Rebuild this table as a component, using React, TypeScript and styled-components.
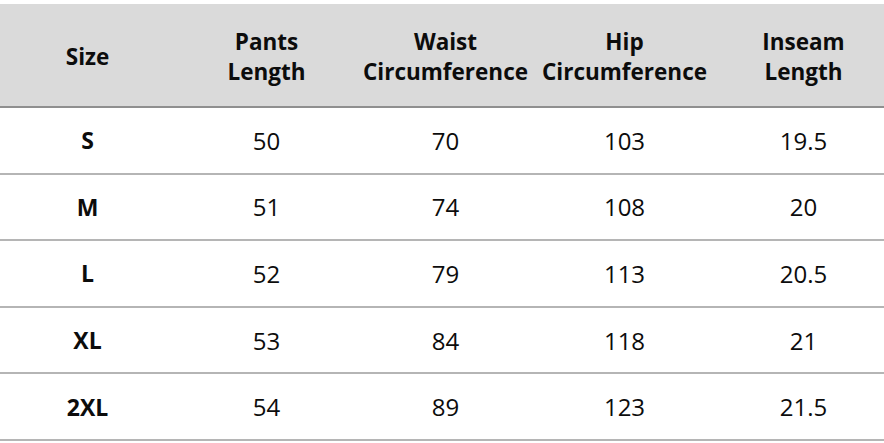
import React from "react";
import styled, { createGlobalStyle } from "styled-components";

const GlobalStyle = createGlobalStyle`
  html, body {
    margin: 0;
    padding: 0;
    background: #ffffff;
    overflow: hidden;
  }
  body {
    font-family: "Open Sans", "Noto Sans", "Liberation Sans", sans-serif;
    color: #0c0c0c;
  }
`;

const columns = ["Size", "Pants\nLength", "Waist\nCircumference", "Hip\nCircumference", "Inseam\nLength"];

const rows = [
  ["S", "50", "70", "103", "19.5"],
  ["M", "51", "74", "108", "20"],
  ["L", "52", "79", "113", "20.5"],
  ["XL", "53", "84", "118", "21"],
  ["2XL", "54", "89", "123", "21.5"],
];

const Page = styled.div`
  width: 884px;
  padding-top: 4px;
  overflow: hidden;
`;

const Table = styled.div`
  display: flex;
  flex-direction: column;
  width: 895px;
  margin-left: -2px;
`;

const HeaderRow = styled.div`
  display: grid;
  grid-template-columns: repeat(5, 179px);
  height: 104px;
  box-sizing: border-box;
  background: #dadada;
  border-bottom: 2px solid #8f8f8f;
  padding-top: 3px;
`;

const HeaderCell = styled.div`
  display: flex;
  align-items: center;
  justify-content: center;
  text-align: center;
  white-space: pre-line;
  font-size: 22.5px;
  line-height: 30px;
  font-weight: 700;
  color: #0c0c0c;
`;

const Row = styled.div`
  display: grid;
  grid-template-columns: repeat(5, 179px);
  height: 66.6px;
  box-sizing: border-box;
  border-bottom: 2px solid #b5b5b5;
`;

const Cell = styled.div<{ $bold?: boolean }>`
  display: flex;
  align-items: center;
  justify-content: center;
  font-size: ${({ $bold }) => ($bold ? 23 : 24)}px;
  font-weight: ${({ $bold }) => ($bold ? 700 : 400)};
  color: #0c0c0c;
`;

export default function App() {
  return (
    <>
      <GlobalStyle />
      <Page>
        <Table>
          <HeaderRow>
            {columns.map((c) => (
              <HeaderCell key={c}>{c}</HeaderCell>
            ))}
          </HeaderRow>
          {rows.map((r) => (
            <Row key={r[0]}>
              {r.map((v, i) => (
                <Cell key={i} $bold={i === 0}>
                  {v}
                </Cell>
              ))}
            </Row>
          ))}
        </Table>
      </Page>
    </>
  );
}
